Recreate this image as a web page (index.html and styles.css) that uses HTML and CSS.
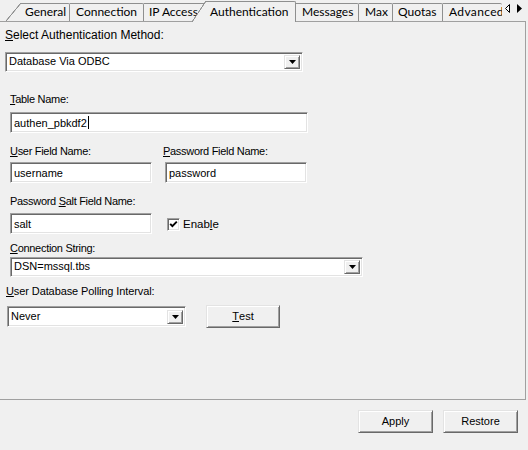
FILE: index.html
```html
<!DOCTYPE html>
<html>
<head>
<meta charset="utf-8">
<link rel="stylesheet" href="styles.css">
</head>
<body>
<div class="tabstrip">
  <div class="tab-spacer"></div>
  <div class="tab tab-general">General</div>
  <div class="tab tab-connection">Connection</div>
  <div class="tab tab-ip">IP Access</div>
  <div class="tab tab-auth active">Authentication</div>
  <div class="tab tab-messages">Messages</div>
  <div class="tab tab-max">Max</div>
  <div class="tab tab-quotas">Quotas</div>
  <div class="tab tab-adv">Advanced</div>
  <div class="tab-scroll">
    <svg width="26" height="21" viewBox="0 0 26 21"><path d="M7.5 4.5 L3.5 8.5 L7.5 12.5 Z" fill="#fff" stroke="#000" stroke-width="1"/><path d="M15 4 L20 8.5 L15 13 Z" fill="#000"/></svg>
  </div>
</div>
<div class="panel">
  <div class="group g1">
    <div class="label label-main"><u>S</u>elect Authentication Method:</div>
    <div class="select sel-method"><span class="value">Database Via ODBC</span><span class="drop"><svg width="7" height="4" viewBox="0 0 7 4"><path d="M0 0h7L3.5 4z"/></svg></span></div>
  </div>
  <div class="group g2">
    <div class="label"><u>T</u>able Name:</div>
    <div class="field field-table">authen_pbkdf2<span class="caret"></span></div>
  </div>
  <div class="group g3">
    <div class="col col-left">
      <div class="label"><u>U</u>ser Field Name:</div>
      <div class="field field-half">username</div>
    </div>
    <div class="col col-right">
      <div class="label"><u>P</u>assword Field Name:</div>
      <div class="field field-half field-pass">password</div>
    </div>
  </div>
  <div class="group g4">
    <div class="label">Password <u>S</u>alt Field Name:</div>
    <div class="row row-salt">
      <div class="field field-half">salt</div>
      <div class="checkbox"><svg width="9" height="9" viewBox="0 0 9 9"><path d="M1.2 3.8 L3.4 6.2 L7.8 1.6" fill="none" stroke="#000" stroke-width="1.9"/></svg></div>
      <div class="check-label">Enab<u>l</u>e</div>
    </div>
  </div>
  <div class="group g5">
    <div class="label"><u>C</u>onnection String:</div>
    <div class="select sel-conn"><span class="value">DSN=mssql.tbs</span><span class="drop"><svg width="7" height="4" viewBox="0 0 7 4"><path d="M0 0h7L3.5 4z"/></svg></span></div>
  </div>
  <div class="group g6">
    <div class="label label-poll"><u>U</u>ser Database Polling Interval:</div>
    <div class="row row-poll">
      <div class="select sel-poll"><span class="value">Never</span><span class="drop"><svg width="7" height="4" viewBox="0 0 7 4"><path d="M0 0h7L3.5 4z"/></svg></span></div>
      <div class="btn btn-test"><u>T</u>est</div>
    </div>
  </div>
</div>
<div class="footer">
  <div class="btn btn-foot">Apply</div>
  <div class="btn btn-foot">Restore</div>
</div>
</body>
</html>
```

FILE: styles.css
```css
html, body {
  margin: 0;
  padding: 0;
  background: #f0f0f0;
  width: 528px;
  height: 450px;
  overflow: hidden;
}

body {
  font-family: "Liberation Sans", Arial, sans-serif;
  font-size: 11px;
  color: #000;
}

u {
  text-decoration: underline;
  text-underline-offset: 1px;
}

/* ---------- tab strip ---------- */
.tabstrip {
  display: flex;
  align-items: flex-end;
  height: 21px;
  font-family: Lato, "Noto Sans", sans-serif;
  font-size: 12px;
}

.tab-spacer {
  width: 21px;
  flex: none;
}

.tab {
  position: relative;
  flex: none;
  box-sizing: border-box;
  height: 18px;
  padding-top: 1px;
  line-height: 14px;
  white-space: nowrap;
  border-top: 1px solid #8e8f8f;
  border-right: 1px solid #8e8f8f;
  border-top-right-radius: 2px;
  background: #f0f0f0;
}

.tab-general { width: 49px; padding-left: 4px; }
.tab-connection { width: 74px; padding-left: 6px; }
.tab-ip { width: 62px; padding-left: 5px; border-right: none; }
.tab-auth { width: 90px; padding-left: 4px; }
.tab-messages { width: 63px; padding-left: 6px; }
.tab-max { width: 34px; padding-left: 6px; }
.tab-quotas { width: 50px; padding-left: 5px; }
.tab-adv { width: 59px; padding-left: 6px; border-right: none; overflow: hidden; letter-spacing: 0.35px; }

.tab-general::before {
  content: "";
  position: absolute;
  left: -15px;
  top: -1px;
  width: 15px;
  height: 18px;
  background: linear-gradient(to bottom right, transparent calc(50% - 0.7px), #8e8f8f calc(50% - 0.3px), #8e8f8f calc(50% + 0.3px), #f0f0f0 calc(50% + 0.7px));
}

.tab.active {
  height: 21px;
  margin-bottom: -1px;
  padding-top: 3px;
  z-index: 2;
}

.tab.active::before {
  content: "";
  position: absolute;
  left: -14px;
  top: -1px;
  width: 14px;
  height: 21px;
  background: linear-gradient(to bottom right, transparent calc(50% - 0.7px), #8e8f8f calc(50% - 0.3px), #8e8f8f calc(50% + 0.3px), #f0f0f0 calc(50% + 0.7px));
}

.tab-scroll {
  flex: none;
  width: 26px;
  height: 21px;
  align-self: flex-start;
}

.tab-scroll svg {
  display: block;
}

/* ---------- panel ---------- */
.panel {
  box-sizing: border-box;
  width: 526px;
  height: 379px;
  border-top: 1px solid #a0a0a0;
  border-right: 1px solid #a0a0a0;
  border-bottom: 1px solid #a0a0a0;
  padding: 6px 0 0 5px;
}

.label {
  line-height: 15px;
  height: 14px;
  white-space: nowrap;
  letter-spacing: -0.3px;
}

.label-main {
  font-size: 12px;
  letter-spacing: 0;
  line-height: 14px;
}

.label-poll {
  letter-spacing: -0.1px;
}

.group { display: block; }

.g1 .select { margin-top: 10px; }

.g2 { margin-top: 20px; margin-left: 5px; }
.g2 .field { margin-top: 6px; }

.g3 { margin-top: 11px; margin-left: 5px; display: flex; }
.g3 .field { margin-top: 4px; }
.col-right { margin-left: 11px; }
.field-pass { margin-left: 2px; }

.g4 { margin-top: 11px; margin-left: 5px; }
.row-salt { margin-top: 5px; display: flex; align-items: center; }

.g5 { margin-top: 7px; margin-left: 5px; }
.g5 .select { margin-top: 2px; }

.g6 { margin-top: 7px; margin-left: 1px; }
.row-poll { margin-top: 7px; display: flex; align-items: center; }

/* sunken field */
.field,
.select {
  box-sizing: border-box;
  background: #fff;
  border: 1px solid;
  border-color: #a0a0a0 #fff #fff #a0a0a0;
  box-shadow: inset 1px 1px 0 #696969, inset -1px -1px 0 #e3e3e3;
  line-height: 15px;
  white-space: nowrap;
}

.field {
  height: 21px;
  padding: 3px 0 0 3px;
}

.field-table { width: 298px; }
.field-half { width: 142px; }

.caret {
  display: inline-block;
  width: 1px;
  height: 13px;
  background: #000;
  vertical-align: -2px;
  margin-left: 1px;
}

.select {
  display: flex;
  padding: 1px 2px 2px 3px;
}

.select .value {
  flex: 1;
}

.select .drop {
  flex: none;
  box-sizing: border-box;
  width: 16px;
  margin-top: 1px;
  border: 1px solid;
  border-color: #e3e3e3 #696969 #696969 #e3e3e3;
  box-shadow: inset 1px 1px 0 #fff, inset -1px -1px 0 #a0a0a0;
  background: #f0f0f0;
  display: flex;
  align-items: center;
  justify-content: center;
}

.select .drop svg { display: block; }

.sel-method { width: 298px; height: 20px; }
.sel-conn { width: 353px; height: 20px; }
.sel-poll { width: 179px; height: 21px; margin-left: 1px; padding-top: 2px; }

/* checkbox */
.checkbox {
  box-sizing: border-box;
  width: 13px;
  height: 13px;
  margin-left: 15px;
  background: #fff;
  border: 1px solid;
  border-color: #a0a0a0 #fff #fff #a0a0a0;
  box-shadow: inset 1px 1px 0 #696969, inset -1px -1px 0 #e3e3e3;
  padding: 1px;
  margin-top: 1px;
}

.checkbox svg { display: block; }

.check-label {
  margin-left: 3px;
  line-height: 15px;
  margin-top: 2px;
  font-size: 11.5px;
}

/* buttons */
.btn {
  box-sizing: border-box;
  height: 23px;
  background: #f0f0f0;
  border: 1px solid;
  border-color: #e3e3e3 #696969 #696969 #e3e3e3;
  box-shadow: inset 1px 1px 0 #fff, inset -1px -1px 0 #a0a0a0;
  display: flex;
  align-items: center;
  justify-content: center;
  line-height: 15px;
}

.btn-test {
  width: 74px;
  margin-left: 20px;
}

.footer {
  display: flex;
  justify-content: flex-end;
  gap: 10px;
  padding: 10px 10px 0 0;
}

.btn-foot { width: 75px; }
```
